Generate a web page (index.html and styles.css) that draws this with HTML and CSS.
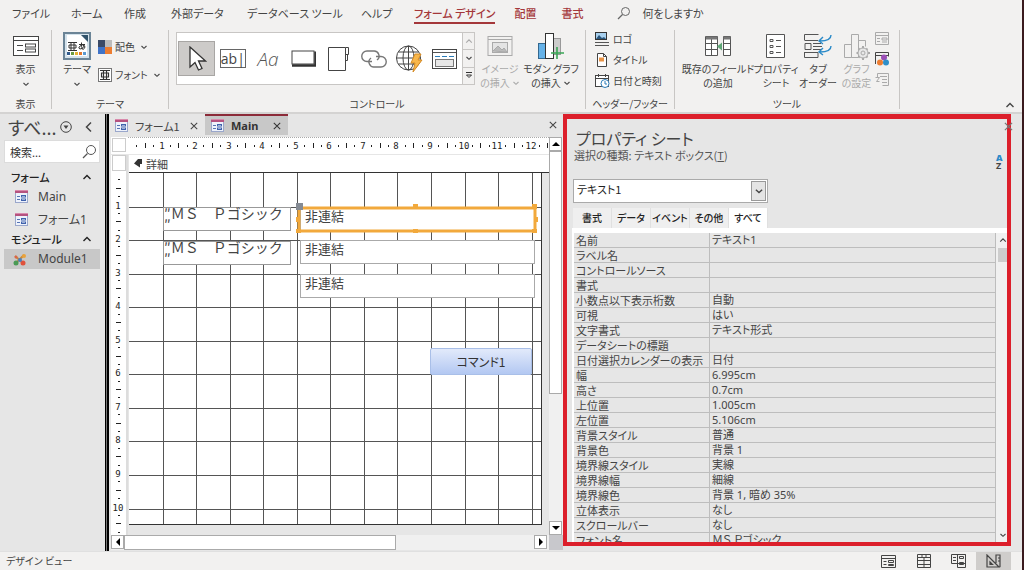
FILE: index.html
```html
<!DOCTYPE html>
<html lang="ja">
<head>
<meta charset="utf-8">
<title>フォーム デザイン</title>
<link rel="stylesheet" href="styles.css">
</head>
<body>
<svg class="defs" aria-hidden="true">
  <symbol id="chev-down" viewBox="0 0 8 8"><path d="M1.5 3 4 5.3 6.5 3" fill="none" stroke="currentColor" stroke-width="1.1"/></symbol>
  <symbol id="chev-up" viewBox="0 0 10 8"><path d="M1.5 6 5 2.5 8.500 6" fill="none" stroke="currentColor" stroke-width="1.4"/></symbol>
  <symbol id="cross" viewBox="0 0 10 10"><path d="M1 1 9 9M9 1 1 9" fill="none" stroke="currentColor" stroke-width="1.3"/></symbol>
  <symbol id="form-icon" viewBox="0 0 15 13">
    <rect x="1.500" y=".5" width="12" height="12" fill="#eef2fb" stroke="#9aa7cb"/>
    <rect x="1" width="13" height="3" fill="#b5527f"/><rect x="1" width="13" height="1" fill="#d98aac"/>
    <path d="M3 6.500h3M3 9.500h3" stroke="#5674b4"/><rect x="7.500" y="5.500" width="4" height="1.500" fill="#fff" stroke="#3f62ad"/><rect x="7.500" y="9" width="4" height="1.500" fill="#fff" stroke="#3f62ad"/>
  </symbol>
</svg>

<nav class="menu">
  <button class="m-file">ファイル</button>
  <button class="m-home">ホーム</button>
  <button class="m-make">作成</button>
  <button class="m-ext">外部データ</button>
  <button class="m-db">データベース ツール</button>
  <button class="m-help">ヘルプ</button>
  <button class="m-design accent current">フォーム デザイン</button>
  <button class="m-place accent">配置</button>
  <button class="m-format accent">書式</button>
  <button class="m-tell"><svg width="14" height="14" viewBox="0 0 14 14"><circle cx="8.500" cy="5.500" r="4" fill="none" stroke="#666"/><path d="M5.500 8.500 1 13" stroke="#666" stroke-width="1.200"/></svg>何をしますか</button>
</nav>

<section class="ribbon">
  <div class="group g-view">
    <div class="tools">
      <button class="big">
        <svg width="26" height="28" viewBox="0 0 26 28"><rect x=".5" y="4.500" width="25" height="19" fill="#fff" stroke="#444"/><path d="M1 8.500h24M4 13.500h6M4 18.500h6" stroke="#444"/><rect x="12.500" y="12" width="10" height="3" fill="none" stroke="#444"/><rect x="12.500" y="17" width="10" height="3" fill="none" stroke="#444"/></svg>
        <span>表示</span><svg class="cd"><use href="#chev-down"/></svg>
      </button>
    </div>
    <h2>表示</h2>
  </div>
  <div class="group g-theme">
    <div class="tools">
      <button class="big">
        <svg width="28" height="28" viewBox="0 0 28 28"><rect x="1" y="1" width="26" height="26" fill="#d5e3ec" stroke="#6b8496" stroke-width="2"/><path d="M4 3h14l6 6v15H4z" fill="#fff"/><path d="M18 3h7v7z" fill="#31536b"/><path d="M5 10.500h9M5 18.500h9M6 13h7v3H6zM8 10.500v8M11 10.500v8" fill="none" stroke="#333"/><path d="M16 12.500h6M18.500 10.500q-.5 4 1 7M21.500 13.500q-2 4-4.500 3.500t0-3 5 .5q0 2-2 3" fill="none" stroke="#333"/><path d="M4 21.500h3" stroke="#315a8c" stroke-width="3"/><path d="M8 21.500h3" stroke="#6b9a3f" stroke-width="3"/><path d="M12 21.500h3" stroke="#e5b233" stroke-width="3"/><path d="M16 21.500h3" stroke="#e2762e" stroke-width="3"/><path d="M20 21.500h3" stroke="#5a9ad0" stroke-width="3"/></svg>
        <span>テーマ</span><svg class="cd"><use href="#chev-down"/></svg>
      </button>
      <div class="stack two">
        <button class="small"><svg width="14" height="14"><path d="M0 0h7v7H0z" fill="#3b4a66"/><path d="M7 0h7v7H7z" fill="#bcbcbc"/><path d="M0 7h7v7H0z" fill="#3f73c8"/><path d="M7 7h7v7H7z" fill="#ed7d31"/></svg>配色<svg class="cd"><use href="#chev-down"/></svg></button>
        <button class="small"><svg width="14" height="14" fill="none" stroke="#333"><rect x=".5" y=".5" width="13" height="13" fill="#fff" stroke="#777"/><path d="M2 2.500h10M2 11.500h10M3.500 5h7v4h-7zM5.500 2.500v9M8.500 2.500v9" stroke-width="1.200"/></svg>フォント<svg class="cd"><use href="#chev-down"/></svg></button>
      </div>
    </div>
    <h2>テーマ</h2>
  </div>
  <div class="group g-controls">
    <div class="tools">
      <div class="gallery">
        <button class="on" aria-label="選択"><svg width="20" height="26" viewBox="0 0 20 26"><path d="M3 1v20l5-4.500 3.500 7.500 3.500-1.500-3.500-7.500h7z" fill="#fff" stroke="#333" stroke-width="1.300"/></svg></button>
        <button class="ab"><span>ab|</span></button>
        <button class="aa">Aa</button>
        <button aria-label="ボタン"><svg width="25" height="17"><rect x="1" y="1" width="22" height="13" fill="#fff" stroke="#444"/><path d="M1 15.500h23.500V1.500" fill="none" stroke="#333" stroke-width="2.500"/></svg></button>
        <button aria-label="タブ コントロール"><svg width="24" height="26" fill="#fff" stroke="#444"><path d="M1.500 1.500h17v23h-17zM18.500 1.500h3v7h-3M18.500 8.500h2v6h-2"/></svg></button>
        <button aria-label="リンク"><svg width="26" height="20" fill="none" stroke="#777" stroke-width="1.400"><path d="M11 12.500H6a5 5 0 0 1 0-10.500h6.500a5 5 0 0 1 3.500 9"/><path d="M15 7.500h5a5 5 0 0 1 0 10.500h-6.500a5 5 0 0 1-3.500-9"/></svg></button>
        <button aria-label="Web"><svg width="27" height="28" fill="none" stroke="#444"><circle cx="12.500" cy="13" r="12"/><ellipse cx="12.500" cy="13" rx="5.500" ry="12"/><path d="M.5 13h24M2.500 7h20M2.500 19h20M12.500 1v24"/><path d="M19 9h6l-3 6h4l-9 12 2-9h-4z" fill="#f8b74c" stroke="#d58a23"/></svg></button>
        <button aria-label="ナビゲーション"><svg width="25" height="20"><rect x=".5" y=".5" width="24" height="19" fill="#fff" stroke="#444"/><path d="M1 3.500h23" stroke="#555"/><path d="M3 7.500h19" stroke="#2b7cb8" stroke-dasharray="5 2"/><rect x="3.500" y="10.500" width="18" height="7" fill="#e8e8e8" stroke="#777"/></svg></button>
        <div class="more">
          <button class="dim" aria-label="前"><svg class="cd"><use href="#chev-up"/></svg></button>
          <button aria-label="次"><svg class="cd"><use href="#chev-down"/></svg></button>
          <button aria-label="その他"><svg width="8" height="9" fill="none" stroke="#333"><path d="M1 1.500h6M1.500 4 4 6.500 6.500 4z"/></svg></button>
        </div>
      </div>
      <button class="big b-img" disabled>
        <svg width="26" height="28" viewBox="0 0 26 28" fill="none" stroke="#aaa"><rect x="1" y="4.500" width="24" height="19"/><path d="M1 7.500h24"/><rect x="5.500" y="10.500" width="15" height="10" fill="#e4e4e4"/><path d="m6 19 5-5 4 4 2-2 3 4z" fill="#bbb"/></svg>
        <span>イメージ<br>の挿入 <svg class="cd"><use href="#chev-down"/></svg></span>
      </button>
      <button class="big b-chart">
        <svg width="28" height="28" viewBox="0 0 28 28"><rect x="1.500" y="11.500" width="8" height="15" fill="#66b2e8" stroke="#33688f"/><rect x="15.500" y="6.500" width="8" height="16" fill="#ccc" stroke="#999"/><rect x="8.500" y="1.500" width="8" height="25" fill="#fff" stroke="#333"/><path d="M20 15v12M14 21h13" stroke="#3aa655" stroke-width="1.600"/></svg>
        <span>モダン グラフ<br>の挿入 <svg class="cd"><use href="#chev-down"/></svg></span>
      </button>
    </div>
    <h2>コントロール</h2>
  </div>
  <div class="group g-head">
    <div class="tools">
      <div class="stack three">
        <button class="small"><svg width="15" height="14"><rect x=".5" y=".5" width="11" height="7" fill="#a8d0ee" stroke="#333"/><path d="m1 7 3-4 3 3 2-1 2 2z" fill="#2a567c"/><path d="M0 10.500h14M0 13.500h14" stroke="#555"/></svg>ロゴ</button>
        <button class="small"><svg width="15" height="14"><path d="M2.500.5h6l3 3v10h-9z" fill="#fff" stroke="#444"/><path d="M8.500.5v3h3" fill="none" stroke="#444"/><path d="M4 6.500h5" stroke="#e89346" stroke-width="4"/></svg>タイトル</button>
        <button class="small"><svg width="15" height="14" fill="none"><rect x=".5" y="1.500" width="13" height="11" fill="#fff" stroke="#444"/><path d="M1 4.500h12M3.500 0v3M10.500 0v3" stroke="#444"/><circle cx="10" cy="9.500" r="4" fill="#fff" stroke="#2b7cb8"/><path d="M10 7v3h2" stroke="#2b7cb8"/></svg>日付と時刻</button>
      </div>
    </div>
    <h2>ヘッダー/フッター</h2>
  </div>
  <div class="group g-tools">
    <div class="tools">
      <button class="big b-field">
        <svg width="26" height="28" viewBox="0 0 26 28" fill="none" stroke="#555"><path d="M.5 4.500h12v19H.5zM.5 11.500h12M.5 17.500h12M6.500 7v16M18.500 4.500h7v19h-7zM18.500 11.500h7M18.500 17.500h7" fill="#fff"/><path d="M1 6h11.500M18.500 6h7" stroke="#777" stroke-width="3"/><path d="m12 14.500 5-4v8z" fill="#5fa777" stroke="none"/></svg>
        <span>既存のフィールド<br>の追加</span>
      </button>
      <button class="big b-prop">
        <svg width="20" height="28" viewBox="0 0 20 28" fill="none" stroke="#555"><path d="M.5 2.500h18v23H.5z" fill="#fff"/><path d="M4 7.500h3v2H4zM4 13.500h3v2H4zM4 19.500h3v2H4zM10 8.500h5M10 14.500h5M10 20.500h5"/></svg>
        <span>プロパティ<br>シート</span>
      </button>
      <button class="big b-tab">
        <svg width="28" height="28" viewBox="0 0 28 28" fill="none" stroke="#555"><path d="M.5 8V2.500h14M14 8.500H.5M0 20.500h14v5H.5v-5M1 11.500h6v6H1zM9 11.500h8M9 14.500h9M9 17.500h8"/><path d="M27 3q0 6-11 6M19 5l-4 4 4 3M27 14q0 6-11 6M19 16l-4 4 4 3" stroke="#2b8ac8" stroke-width="1.400"/></svg>
        <span>タブ<br>オーダー</span>
      </button>
      <button class="big b-graph" disabled>
        <svg width="26" height="28" viewBox="0 0 26 28" fill="none" stroke="#aaa"><path d="M.5 12.500h7v13h-7zM7.500 2.500h7v23h-7zM14.500 8.500h7v6"/><path d="M19 14v3M19 25v3M12.500 21h2M23.500 21H26M14.500 16.500l1.500 1.500M22 24l1.500 1.500M23.500 16.500 22 18M16 24l-1.500 1.500" stroke-width="2"/><circle cx="19" cy="21" r="5" fill="#e8e8e8"/><circle cx="19" cy="21" r="2"/></svg>
        <span>グラフ<br>の設定</span>
      </button>
      <div class="stack icons">
        <button disabled aria-label="サブフォーム"><svg width="14" height="13" fill="none" stroke="#aaa"><path d="M.5.5h13v12H.5zM.5 3.500h13M2 6.500h3M2 9.500h3M7 6h5v2H7zM7 10h5"/></svg></button>
        <button aria-label="コードの表示"><svg width="14" height="14"><path d="M.5 12V.5h13v4M.5 3.500h13" fill="none" stroke="#444"/><circle cx="9" cy="5.500" r="3" fill="#9b4fb5"/><circle cx="5" cy="10.500" r="3" fill="#ed7d31"/><circle cx="11" cy="10.500" r="3" fill="#2f8fc8"/></svg></button>
        <button disabled aria-label="マクロ"><svg width="14" height="13" fill="none" stroke="#aaa"><path d="M2.500 4V.5h11v12h-6M.5 4.500h4l-3 4h3M5 3.500h7M7 6.500h5M7 9.500h5"/></svg></button>
      </div>
    </div>
    <h2>ツール</h2>
  </div>
  <button class="collapse" aria-label="リボンを折りたたむ"><svg width="10" height="8"><use href="#chev-up"/></svg></button>
</section>

<main class="workspace">
  <aside class="nav">
    <header><h1>すべ...</h1>
      <button aria-label="メニュー"><svg width="12" height="12" fill="none" stroke="#444"><circle cx="6" cy="6" r="5.300"/><path d="M3.500 4.500h5L6 8z" fill="#444" stroke="none"/></svg></button>
      <button aria-label="閉じる"><svg width="8" height="12" fill="none" stroke="#444" stroke-width="1.500"><path d="M6 1.500 1.500 6 6 10.500"/></svg></button>
    </header>
    <div class="search"><input type="text" placeholder="検索..." aria-label="検索"><svg width="15" height="15" fill="none" stroke="#555"><circle cx="9" cy="6" r="4.500"/><path d="M5.500 9.500 1 14" stroke-width="1.300"/></svg></div>
    <button class="cat">フォーム<svg width="10" height="8"><use href="#chev-up"/></svg></button>
    <button class="obj"><svg width="15" height="13"><use href="#form-icon"/></svg>Main</button>
    <button class="obj"><svg width="15" height="13"><use href="#form-icon"/></svg>フォーム1</button>
    <button class="cat">モジュール<svg width="10" height="8"><use href="#chev-up"/></svg></button>
    <button class="obj sel"><svg width="15" height="13"><path d="M3 3l9 8M12 2 4 10" stroke="#c98a3a" stroke-width="2"/><circle cx="4" cy="10" r="2.500" fill="#4a9a55"/><circle cx="11" cy="10" r="2.500" fill="#e0523c"/><circle cx="12" cy="3" r="2" fill="#e9a23b"/><circle cx="4" cy="4" r="1.500" fill="#d9644a"/><circle cx="8" cy="7" r="2" fill="#4a7fc0"/></svg>Module1</button>
  </aside>
  <div class="splitter"></div>

  <section class="doc">
    <div class="doctabs">
      <div class="dtab"><svg width="15" height="13"><use href="#form-icon"/></svg><span>フォーム1</span><button aria-label="閉じる"><svg width="8" height="8"><use href="#cross"/></svg></button></div>
      <div class="dtab active"><svg width="15" height="13"><use href="#form-icon"/></svg><span>Main</span><button aria-label="閉じる"><svg width="8" height="8"><use href="#cross"/></svg></button></div>
      <button class="closeall" aria-label="閉じる"><svg width="8" height="8"><use href="#cross"/></svg></button>
    </div>
    <div class="designer">
      <div class="view">
        <div class="corner"><i></i></div>
        <svg class="hruler" id="hruler"></svg>
        <div class="vside"><i></i><svg class="vruler" id="vruler"></svg></div>
        <div class="sheet">
          <div class="band"><svg width="9" height="9"><path d="M8 0v5H6v3.500L0 4.500 4 0z" fill="#333"/></svg>詳細</div>
          <div class="canvas">
            <svg id="grid" width="414" height="353"></svg>
            <label class="lbl l1" for="t1">″ＭＳ　Ｐゴシック<br>″</label>
            <label class="lbl l2" for="t2">″ＭＳ　Ｐゴシック<br>″</label>
            <input class="fld f1" id="t1" value="非連結">
            <input class="fld f2" id="t2" value="非連結">
            <input class="fld f3" value="非連結" aria-label="テキスト3">
            <svg class="handles" width="242" height="32"><path d="M3 7h236v23H3z" fill="none" stroke="#f2a93c" stroke-width="3"/><path d="M117 3h5v5h-5zM236 3h5v5h-5zM0 28h5v4H0zM117 28h5v4h-5zM236 28h5v4h-5zM0 16h4v5H0zM238 16h4v5h-4z" fill="#f2a93c"/><path d="M0 2h7v7H0z" fill="#858b94"/></svg>
            <button class="cmd">コマンド1</button>
          </div>
        </div>
      </div>
      <div class="vscroll"><button aria-label="上"><svg width="8" height="4"><path d="M0 4h8L4 0z"/></svg></button><div class="thumb"></div><button class="end" aria-label="下"><svg width="8" height="4"><path d="M0 0h8L4 4z"/></svg></button></div>
      <div class="hscroll"><button aria-label="左"><svg width="4" height="8"><path d="M4 0v8L0 4z"/></svg></button><div class="thumb"></div><button class="end" aria-label="右"><svg width="4" height="8"><path d="M0 0v8l4-4z"/></svg></button></div>
      <div class="grip"></div>
    </div>
  </section>

  <section class="props">
    <h1>プロパティ シート</h1>
    <p>選択の種類: テキスト ボックス(<u>T</u>)</p>
    <div class="combo"><select aria-label="オブジェクト"><option>テキスト1</option></select><span class="drop"><svg width="10" height="10"><use href="#chev-down"/></svg></span></div>
    <div class="ptabs"><button>書式</button><button>データ</button><button>イベント</button><button>その他</button><button class="active">すべて</button></div>
    <div class="sheetbox">
      <div class="clip">
      <table>
        <tr><th>名前</th><td>テキスト1</td></tr>
        <tr><th>ラベル名</th><td></td></tr>
        <tr><th>コントロールソース</th><td></td></tr>
        <tr><th>書式</th><td></td></tr>
        <tr><th>小数点以下表示桁数</th><td>自動</td></tr>
        <tr><th>可視</th><td>はい</td></tr>
        <tr><th>文字書式</th><td>テキスト形式</td></tr>
        <tr><th>データシートの標題</th><td></td></tr>
        <tr><th>日付選択カレンダーの表示</th><td>日付</td></tr>
        <tr><th>幅</th><td>6.995cm</td></tr>
        <tr><th>高さ</th><td>0.7cm</td></tr>
        <tr><th>上位置</th><td>1.005cm</td></tr>
        <tr><th>左位置</th><td>5.106cm</td></tr>
        <tr><th>背景スタイル</th><td>普通</td></tr>
        <tr><th>背景色</th><td>背景 1</td></tr>
        <tr><th>境界線スタイル</th><td>実線</td></tr>
        <tr><th>境界線幅</th><td>細線</td></tr>
        <tr><th>境界線色</th><td>背景 1, 暗め 35%</td></tr>
        <tr><th>立体表示</th><td>なし</td></tr>
        <tr><th>スクロールバー</th><td>なし</td></tr>
        <tr><th>フォント名</th><td>ＭＳ Ｐゴシック</td></tr>
      </table>
      </div>
      <div class="pscroll"><svg width="8" height="8"><use href="#chev-up"/></svg><i></i><svg width="8" height="8" class="end"><use href="#chev-down"/></svg></div>
    </div>
    <button class="pclose" aria-label="閉じる"><svg width="9" height="9"><use href="#cross"/></svg></button>
    <button class="sort"><b>A</b><span>Z</span></button>
  </section>
</main>

<footer class="status">
  <span>デザイン ビュー</span>
  <div class="views">
    <button aria-label="フォーム ビュー"><svg width="15" height="13" fill="none" stroke="#444"><path d="M.5.5h14v12H.5zM.5 3.500h14M2.500 6.500h3M2.500 9.500h3M7.500 5.500h5v2h-5zM7.500 9.500h5v1h-5z"/></svg></button>
    <button aria-label="データシート ビュー"><svg width="14" height="14" fill="none" stroke="#444"><path d="M.5.5h13v3H.5zM.5 3.500h13v10H.5zM.5 6.500h13M.5 10.500h13M7 3v10M4 2h2M8 2h2"/></svg></button>
    <button aria-label="レイアウト ビュー"><svg width="15" height="14" fill="none" stroke="#444"><path d="M.5.5h14v9H.5zM6.500.5v13h8V.5M2 3.500h3M2 6.500h3M8.500 2.500h4v2h-4zM8.500 8.500h4v2h-4z"/></svg></button>
    <button class="on" aria-label="デザイン ビュー"><svg width="15" height="14" fill="none" stroke="#444" stroke-width="1.200"><path d="M1 1v12h12zM4 8v2.500h2.500zM10 9V1h4v12M12 4h2M12 7h2"/></svg></button>
  </div>
</footer>
<script src="app.js"></script>
</body>
</html>
```
FILE: app.js
```js
// Draws the centimetre grid and both rulers of the form designer.
const NS = "http://www.w3.org/2000/svg";
const CM = 33.55;
const at = n => Math.round(n * CM);

function add(parent, name, attrs, text) {
  const el = document.createElementNS(NS, name);
  for (const key in attrs) el.setAttribute(key, attrs[key]);
  if (text) el.textContent = text;
  parent.appendChild(el);
}

const grid = document.getElementById("grid");
const W = 413, H = 352;
for (let i = 1; i <= 12; i++) add(grid, "rect", { x: at(i), y: 0, width: 1, height: H, fill: "#555" });
for (let i = 1; i <= 10; i++) add(grid, "rect", { x: 0, y: at(i), width: W, height: 1, fill: "#555" });
add(grid, "rect", { x: W - 1, y: 0, width: 1, height: H, fill: "#333" });
add(grid, "rect", { x: 0, y: H - 1, width: W, height: 1, fill: "#333" });

// Marks fall on every quarter; whole centimetres carry a number.
function ruler(svg, quarters, vertical) {
  for (let q = 1; q <= quarters; q++) {
    const p = at(q / 4);
    if (q % 4 === 0) {
      const place = vertical ? { x: 7, y: p + 4 } : { x: p, y: 11 };
      add(svg, "text", { ...place, "text-anchor": "middle" }, String(q / 4));
      continue;
    }
    const size = q % 4 === 2 ? 5 : 2;
    const from = q % 4 === 2 ? 5 : 7;
    add(svg, "rect", vertical
      ? { x: from, y: p, width: size, height: 1 }
      : { x: p, y: from, width: 1, height: size });
  }
}
ruler(document.getElementById("hruler"), 50, false);
ruler(document.getElementById("vruler"), 43, true);
```
FILE: styles.css
```css
* { box-sizing: border-box; }
html, body { height: 100%; }
body {
  margin: 0; display: flex; flex-direction: column; overflow: hidden;
  background: #f2f1f0; color: #444; border-right: 2px solid #3a1a1e;
  font: 11px/14px "Noto Sans CJK JP", sans-serif;
  font-feature-settings: "palt";
}
button, input, select { font: inherit; font-feature-settings: inherit; color: inherit; border: 0; background: none; padding: 0; margin: 0; border-radius: 0; }
button { white-space: nowrap; }
h1, h2, p { margin: 0; font-weight: 400; }
svg { display: block; flex: none; }
.defs { position: absolute; width: 0; height: 0; }
.cd { width: 8px; height: 8px; }

/* Menu */
.menu { display: flex; height: 30px; align-items: flex-start; padding: 6px 0 0 12px; }
.menu button { height: 18px; padding-bottom: 2px; text-align: left; border-bottom: 2px solid transparent; }
.m-file { width: 59px; } .m-home { width: 53px; } .m-make { width: 47px; } .m-ext { width: 76px; }
.m-db { width: 114px; } .m-help { width: 53px; }
.m-design { margin-right: 19px; } .m-place { width: 47px; } .m-format { width: 56px; }
.menu .accent { color: #a4373a; font-weight: 500; }
.menu .current { border-color: #a4373a; }
.menu .m-tell { display: flex; gap: 11px; align-items: center; }

/* Ribbon */
.ribbon { display: flex; height: 84px; border-bottom: 2px solid #d4d3d2; padding-bottom: 3px; }
.group { display: flex; flex-direction: column; justify-content: space-between; border-right: 1px solid #c8c6c4; padding-top: 2px; }
.group h2 { font-size: 10px; text-align: center; line-height: 11px; }
.tools { display: flex; align-items: flex-start; }
.g-view { width: 52px; } .g-theme { width: 117px; } .g-controls { width: 417px; } .g-head { width: 89px; } .g-tools { width: 225px; }
.g-view .tools { justify-content: center; }
.g-theme .tools { padding-left: 11px; gap: 7px; }
.g-controls .tools { padding-left: 7px; }
.g-head .tools { padding-left: 9px; }
.g-tools .tools { padding-left: 7px; }
.big { display: flex; flex-direction: column; align-items: center; gap: 2px; font-size: 10px; }
.big > span { line-height: 14px; }
.big > .cd { margin-top: 2px; }
.big span .cd { display: inline-block; }
.big:disabled { color: #aaa; }
.stack { display: flex; flex-direction: column; align-items: flex-start; }
.two { padding-top: 8px; gap: 14px; }
.three { gap: 7px; }
.small { display: flex; align-items: center; gap: 3px; height: 14px; font-size: 10px; }
.small .cd { margin-left: 2px; }
.icons { gap: 7px; }
.gallery { display: flex; width: 299px; height: 53px; background: #fff; border: 1px solid #c8c6c4; align-items: center; padding-left: 1px; }
.gallery > button { flex: 1; height: 35px; display: flex; align-items: center; justify-content: center; }
.gallery > .on { background: #cdcbc9; border: 1px solid #a8a6a4; }
.ab span { border: 1px solid #666; font: 14px/17px "Open Sans", sans-serif; }
.gallery > .aa { font: italic 300 19px/24px "Open Sans", sans-serif; color: #555; }
.more { width: 12px; align-self: stretch; display: flex; flex-direction: column; border-left: 1px solid #c8c6c4; background: #f2f1f0; }
.more button { flex: 1; display: flex; align-items: center; justify-content: center; }
.more button + button { border-top: 1px solid #c8c6c4; }
.dim { color: #aaa; }
.b-img { width: 50px; } .b-chart { width: 52px; }
.b-field { width: 72px; } .b-prop { width: 44px; } .b-tab { width: 40px; } .b-graph { width: 37px; }
.collapse { margin: auto 7px 0 auto; }

/* Workspace */
.workspace { flex: 1; min-height: 0; display: grid; grid-template-columns: 105px 4px minmax(0, 1fr) 448px; padding-right: 11px; background: #e6e6e6; }
.nav { display: flex; flex-direction: column; padding: 0 5px 0 4px; }
.nav header { display: flex; align-items: center; height: 26px; padding-left: 4px; }
.nav h1 { font-size: 18px; line-height: 24px; flex: 1; white-space: nowrap; }
.nav header button + button { margin: 0 7px 0 13px; }
.search { display: flex; align-items: center; background: #fff; height: 23px; margin-bottom: 6px; padding: 0 2px 0 5px; border: 1px solid #dcdcdc; }
.search input { width: 0; flex: 1; outline: 0; }
.search input::placeholder { color: #333; opacity: 1; }
.cat { display: flex; justify-content: space-between; align-items: center; height: 16px; padding: 0 8px 0 7px; font-weight: 500; color: #222; }
.obj { display: flex; align-items: center; gap: 9px; height: 23px; padding-left: 10px; font-family: "Noto Sans", "Noto Sans CJK JP", sans-serif; font-size: 12px; }
.obj.sel { background: #c8c8c8; height: 20px; padding-left: 8px; gap: 11px; margin-top: 2px; }
.splitter { background: #777; border: solid #000; border-width: 0 2px 0 1px; }

.doc { display: flex; flex-direction: column; min-width: 0; }
.doctabs { display: flex; height: 21px; align-items: stretch; }
.dtab { display: flex; align-items: center; padding: 0 7px 0 5px; gap: 6px; width: 96px; border-top: 2px solid transparent; font-size: 11px; }
.dtab button { margin-left: auto; }
.dtab.active { width: 83px; background: #c8c8c8; border-top-color: #8c2b39; font: 700 11px/14px "Noto Sans", sans-serif; color: #333; }
.closeall { margin: 0 6px 0 auto; }
.designer { flex: 1; min-height: 0; display: grid; grid-template: minmax(0, 1fr) 15px / minmax(0, 1fr) 14px; padding: 2px 0 1px 2px; }
.view { display: grid; grid-template: 17px minmax(0, 1fr) / 17px minmax(0, 1fr); overflow: hidden; }
.corner, .vside, .hruler { background: #fff; }
.corner i, .vside i { display: block; width: 14px; height: 14px; margin: 1px; border: 1px solid #ccc; }
.vside { display: flex; flex-direction: column; margin-top: 1px; border-right: 2px solid #ddd; }
.vside i { height: 16px; margin: 0 1px; }
.hruler, .vruler { width: 100%; font: 9px "DejaVu Sans Mono", monospace; fill: #222; }
.hruler { height: 17px; border-top: 1px dotted #aaa; }
.vruler { flex: 1; min-height: 0; }
.sheet { overflow: hidden; padding-left: 1px; margin-top: 1px; }
.band { display: flex; align-items: center; gap: 3px; height: 18px; background: #fff; border-bottom: 1px solid #333; padding-left: 5px; }
.canvas { position: relative; width: 414px; height: 353px; }
.canvas > svg:first-child { background: linear-gradient(#fff, #fff) 0 0 / 413px 352px no-repeat; }
.lbl, .fld, .cmd, .handles { position: absolute; }
.lbl { left: 34px; width: 128px; height: 24px; background: #fff; border: 1px solid #999; font: 14px/11px "Noto Sans CJK JP", sans-serif; font-feature-settings: normal; white-space: nowrap; }
.l1 { top: 34px; } .l2 { top: 68px; }
.fld { left: 171px; width: 235px; height: 24px; background: #fff; border: 1px solid #aaa; padding: 0 0 8px 4px; font-size: 13px; line-height: 15px; }
.f1 { top: 34px; } .f2 { top: 67px; } .f3 { top: 101px; }
.handles { left: 167px; top: 28px; }
.cmd { left: 301px; top: 175px; width: 102px; height: 27px; font-size: 12px; color: #333; border: 1px solid #a9bfe8; border-radius: 2px; background: linear-gradient(#e2eafb, #b3c8f2); }
.vscroll, .hscroll { display: flex; background: #f0f0f0; }
.vscroll { flex-direction: column; }
.vscroll button, .hscroll button { display: flex; align-items: center; justify-content: center; width: 13px; height: 14px; border: 1px solid #aaa; background: #fff; }
.thumb { background: #fff; border: 1px solid #aaa; }
.vscroll .thumb { height: 61%; width: 13px; }
.hscroll .thumb { width: 62%; }
.vscroll .end { margin-top: auto; }
.hscroll .end { margin-left: auto; margin-right: 2px; }
.grip { background: #c8c8cc; }

/* Property sheet */
.props { position: relative; display: flex; flex-direction: column; min-height: 0; margin-bottom: 5px; border: solid #dc1f2b; border-width: 5px 4px 4px; padding: 9px 0 0 5px; }
.props h1 { font-size: 16px; line-height: 20px; padding-left: 4px; }
.props p { padding-left: 2px; color: #555; line-height: 14px; }
.combo { display: flex; width: 195px; height: 24px; margin: 17px 0 5px 1px; background: #fff; border: 1px solid #aaa; }
.combo select { flex: 1; appearance: none; outline: 0; padding: 0 0 4px 3px; color: #222; }
.drop { display: flex; align-items: center; justify-content: center; width: 15px; margin: 1px; border: 1px solid #999; background: #e4e4e4; }
.ptabs { display: flex; height: 20px; padding-left: 1px; }
.ptabs button { width: 39px; background: #efefef; border-right: 1px solid #e0e0e0; color: #222; font-size: 10px; font-weight: 500; }
.ptabs .active { background: #fff; }
.sheetbox { flex: 1; min-height: 0; display: flex; background: #fff; padding: 5px 0 0 2px; }
.clip { flex: 1; overflow: hidden; }
table { width: 100%; border-collapse: separate; border-spacing: 0; table-layout: fixed; background: #e6e6e6; }
th, td { height: 15px; padding: 0 0 0 2px; line-height: 14px; text-align: left; font-weight: 400; border-bottom: 1px solid #bdbdbd; white-space: nowrap; }
th { width: 136px; border-right: 1px solid #bdbdbd; }
td { border-right: 1px solid #bdbdbd; font-family: "Noto Sans", "Noto Sans CJK JP", sans-serif; }
.pscroll { width: 11px; background: #f0f0f0; display: flex; flex-direction: column; align-items: flex-end; padding-top: 3px; }
.pscroll i { width: 9px; height: 14px; background: #cdcdcd; margin-top: 4px; }
.pscroll .end { margin-top: auto; margin-bottom: 3px; }
.pclose { position: absolute; right: -6px; top: 3px; color: #777; }
.sort { position: absolute; right: 0; top: 35px; width: 11px; font: 700 9px/8px "Noto Sans", sans-serif; text-align: left; }
.sort b, .sort span { display: block; }
.sort b { color: #2b8ac8; }

/* Status bar */
.status { display: flex; align-items: center; height: 19px; padding: 0 11px 0 6px; border-top: 1px solid #e0e0e0; font-size: 10px; }
.views { margin-left: auto; display: flex; align-self: stretch; }
.views button { width: 35px; display: flex; align-items: center; justify-content: center; }
.views .on { background: #cfcdcb; }
```
